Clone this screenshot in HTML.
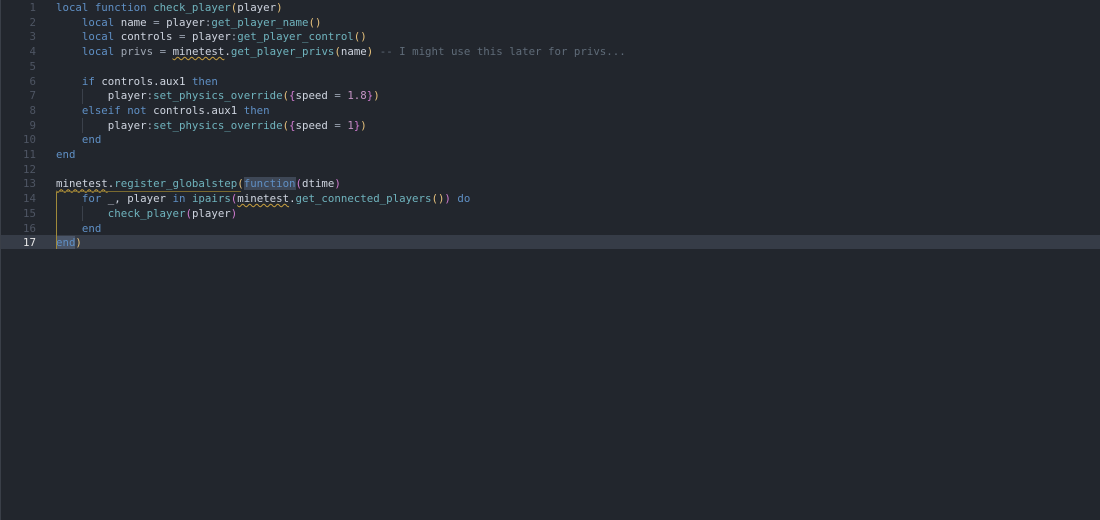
<!DOCTYPE html><html><head><style>
body{margin:0;background:#22262d;width:1100px;height:520px;overflow:hidden;position:relative;font-family:"DejaVu Sans Mono","Liberation Mono",monospace;font-size:10.75px}
.ed{position:absolute;left:0;top:0;width:1100px;height:520px;border-left:1px solid #3a3f48}
.l{position:absolute;left:0;height:14.7px;line-height:14.7px;width:1100px;white-space:pre;color:#cdd3de}
.n{position:absolute;left:0;width:35px;text-align:right;color:#4e5563}
.c{position:absolute;left:55px}
.cur{background:#363c47}
.cur .n{color:#e6e6e6}
.k{color:#5f8fc4}.f{color:#6fb3bd}.y{color:#e5c07b}.m{color:#d07bd0}.num{color:#c594c5}.cm{color:#5f6b78}.o{color:#9aa3b0}.d{color:#a0a8b4}
.u{text-decoration:underline wavy #c8a040;text-decoration-thickness:1px}
.g{position:absolute;width:1px;background:#3b414b}
</style></head><body><div class="ed">
<div class="l" style="top:1px"><span class="n">1</span><span class="c"><span class="k">local function</span> <span class="f">check_player</span><span class="y">(</span>player<span class="y">)</span></span></div>
<div class="l" style="top:15.7px"><span class="n">2</span><span class="c">    <span class="k">local</span> name <span class="o">=</span> player<span class="o">:</span><span class="f">get_player_name</span><span class="y">()</span></span></div>
<div class="l" style="top:30.4px"><span class="n">3</span><span class="c">    <span class="k">local</span> controls <span class="o">=</span> player<span class="o">:</span><span class="f">get_player_control</span><span class="y">()</span></span></div>
<div class="l" style="top:45.1px"><span class="n">4</span><span class="c">    <span class="k">local</span> <span class="d">privs</span> <span class="o">=</span> <span class="u">minetest</span>.<span class="f">get_player_privs</span><span class="y">(</span>name<span class="y">)</span> <span class="cm">-- I might use this later for privs...</span></span></div>
<div class="l" style="top:59.8px"><span class="n">5</span></div>
<div class="l" style="top:74.5px"><span class="n">6</span><span class="c">    <span class="k">if</span> controls.aux1 <span class="k">then</span></span></div>
<div class="l" style="top:89.2px"><span class="n">7</span><span class="c">        player<span class="o">:</span><span class="f">set_physics_override</span><span class="y">(</span><span class="m">{</span>speed <span class="o">=</span> <span class="num">1.8</span><span class="m">}</span><span class="y">)</span></span></div>
<div class="l" style="top:103.9px"><span class="n">8</span><span class="c">    <span class="k">elseif not</span> controls.aux1 <span class="k">then</span></span></div>
<div class="l" style="top:118.6px"><span class="n">9</span><span class="c">        player<span class="o">:</span><span class="f">set_physics_override</span><span class="y">(</span><span class="m">{</span>speed <span class="o">=</span> <span class="num">1</span><span class="m">}</span><span class="y">)</span></span></div>
<div class="l" style="top:133.3px"><span class="n">10</span><span class="c">    <span class="k">end</span></span></div>
<div class="l" style="top:148px"><span class="n">11</span><span class="c"><span class="k">end</span></span></div>
<div class="l" style="top:162.7px"><span class="n">12</span></div>
<div class="l" style="top:177.4px"><span class="n">13</span><span class="c"><span class="u">minetest</span>.<span class="f">register_globalstep</span><span class="y">(</span><span class="k" style="background:#3e4756">function</span><span class="m">(</span>dtime<span class="m">)</span></span></div>
<div class="l" style="top:192.1px"><span class="n">14</span><span class="c">    <span class="k">for</span> _, player <span class="k">in</span> <span class="f">ipairs</span><span class="m">(</span><span class="u">minetest</span>.<span class="f">get_connected_players</span><span class="y">()</span><span class="m">)</span> <span class="k">do</span></span></div>
<div class="l" style="top:206.8px"><span class="n">15</span><span class="c">        <span class="f">check_player</span><span class="m">(</span>player<span class="m">)</span></span></div>
<div class="l" style="top:221.5px"><span class="n">16</span><span class="c">    <span class="k">end</span></span></div>
<div class="l cur" style="top:235.2px;height:14.2px;line-height:15.7px"><span class="n">17</span><span class="c"><span class="k" style="background:#4a5568">end</span><span class="y">)</span></span></div>
<div class="g" style="left:81px;top:89px;height:15px"></div>
<div class="g" style="left:81px;top:118px;height:15px"></div>
<div class="g" style="left:81px;top:206px;height:15px"></div>
<div style="position:absolute;left:55px;top:191px;width:1px;height:58px;background:#a08a3a"></div>
<div style="position:absolute;left:55px;top:191px;width:185px;height:1px;background:#7a6a30"></div>
</div></body></html>
